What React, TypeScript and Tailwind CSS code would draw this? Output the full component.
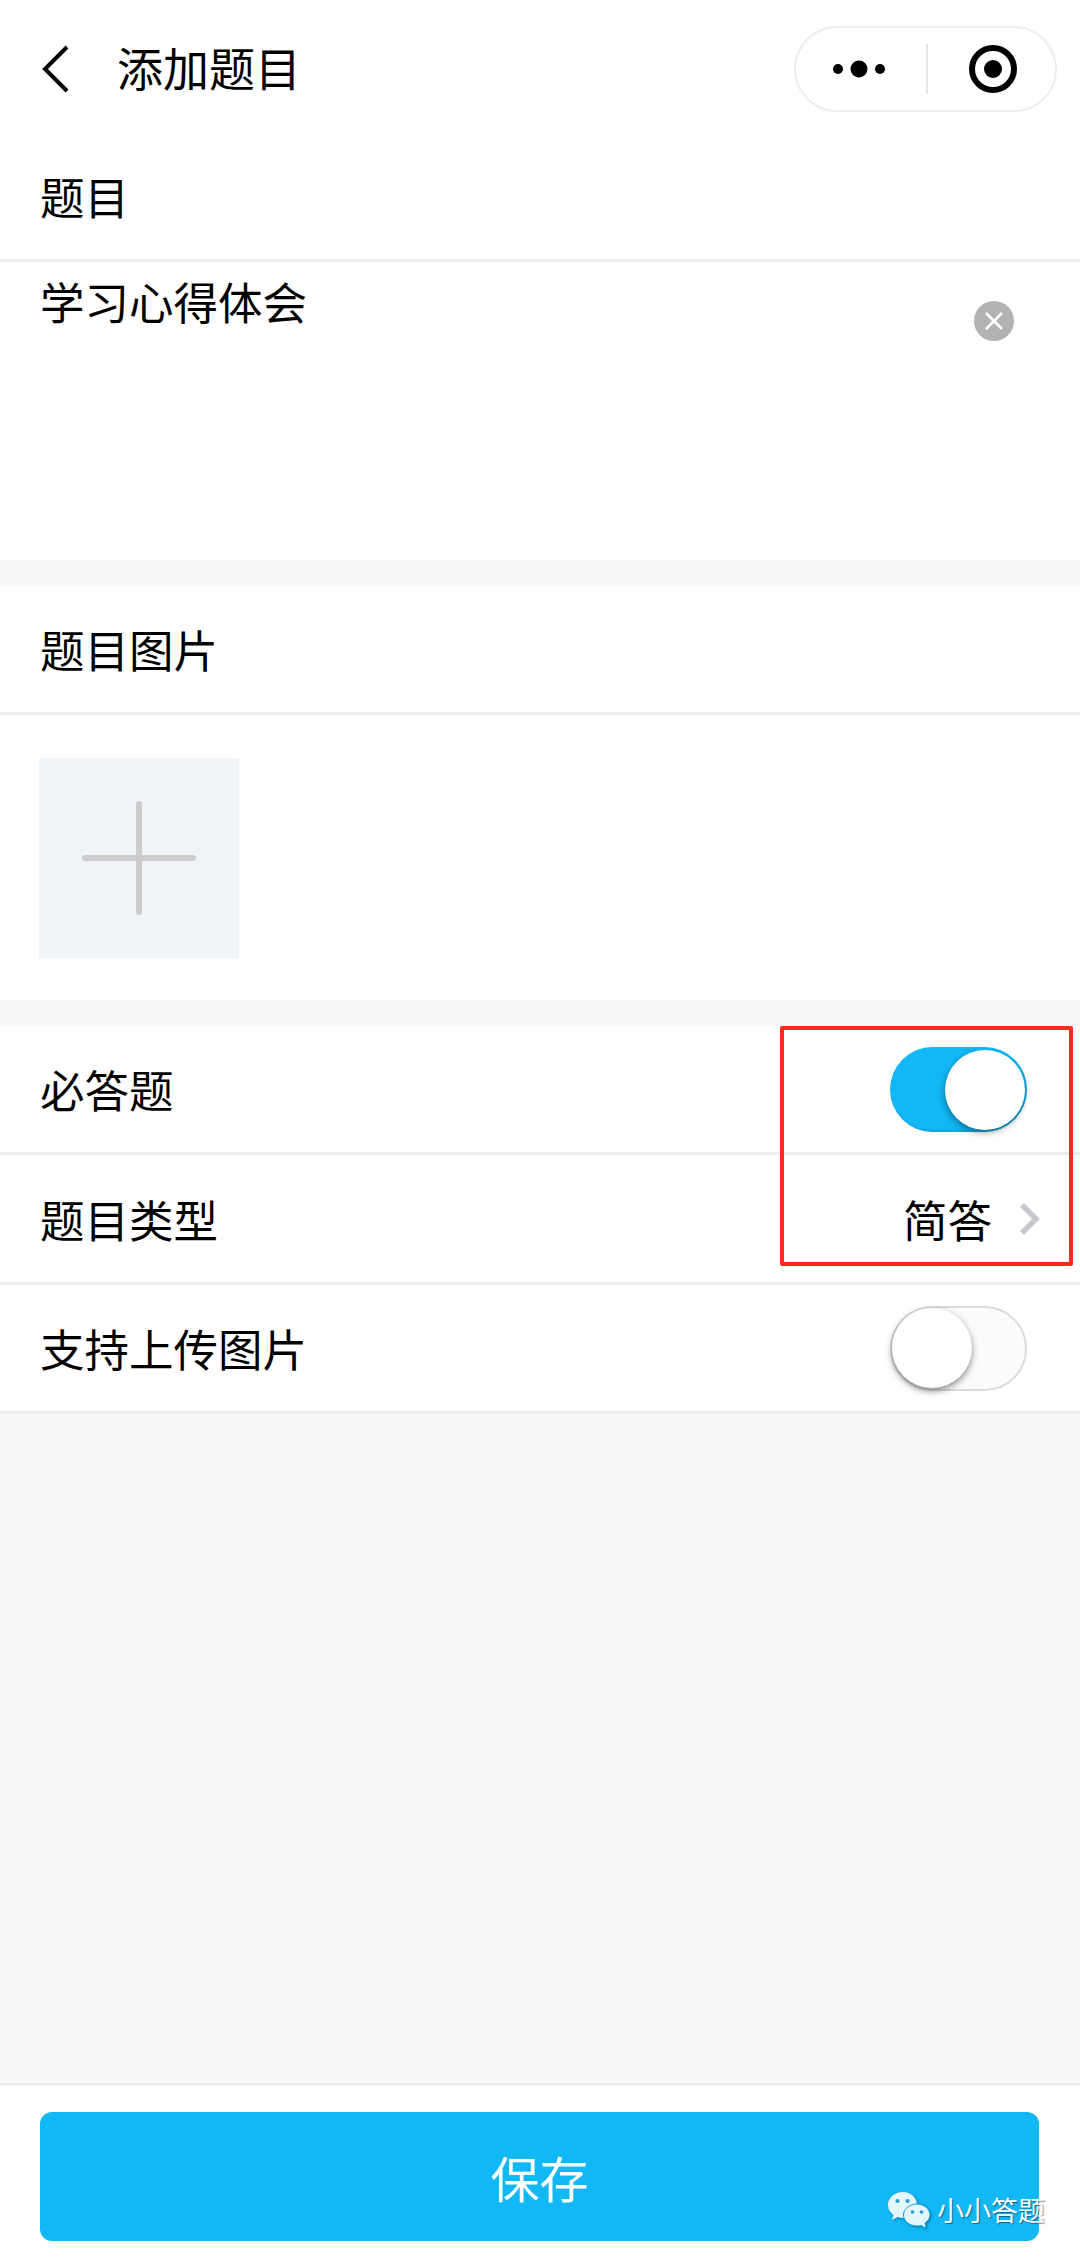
import React from "react";

function Toggle({ on }: { on: boolean }) {
  return (
    <div
      className={
        on
          ? "relative h-[85px] w-[137px] rounded-full bg-[#12b7f5] shadow-[inset_-2px_-2px_2px_rgba(30,120,160,0.35)]"
          : "relative h-[85px] w-[137px] rounded-full border-2 border-[#d9dcdf] bg-[#fbfbfb]"
      }
    >
      <div
        className={
          on
            ? "absolute right-[2px] top-[3px] h-[80px] w-[80px] rounded-full bg-white shadow-[-1px_3px_6px_rgba(0,0,0,0.35)]"
            : "absolute left-0 top-0 h-[80px] w-[80px] rounded-full bg-white shadow-[0_3px_7px_rgba(0,0,0,0.45)]"
        }
      />
    </div>
  );
}

export default function App() {
  return (
    <div className="relative flex h-[2261px] w-[1080px] flex-col overflow-hidden bg-[#f8f8f8] font-['Noto_Sans_CJK_SC',sans-serif] text-[44.5px] leading-[60px] text-black">
      {/* Navigation + title row */}
      <div className="flex h-[130px] items-center bg-white pl-[40px] pr-[23px] pt-[7px]">
        <svg width="28" height="48" viewBox="0 0 28 48" fill="none" className="ml-[2px] mr-[47px]">
          <path d="M25 2 L3 24 L25 46" stroke="#000" strokeWidth="4" />
        </svg>
        <span className="mt-[-6px] text-[46px]">添加题目</span>
        <div className="ml-auto flex h-[86px] w-[263px] items-center rounded-full border-2 border-[#ededed] bg-white">
          <svg width="130" height="50" viewBox="0 0 130 50" className="shrink-0">
            <circle cx="42" cy="25" r="5" fill="#000" />
            <circle cx="63" cy="25" r="8.5" fill="#000" />
            <circle cx="84" cy="25" r="5" fill="#000" />
          </svg>
          <div className="h-[50px] w-[2px] bg-[#e5e5e5]" />
          <svg width="50" height="50" viewBox="0 0 50 50" className="ml-[40px] shrink-0">
            <circle cx="25" cy="25" r="21" fill="none" stroke="#000" strokeWidth="6" />
            <circle cx="25" cy="25" r="9" fill="#000" />
          </svg>
        </div>
      </div>

      <div className="flex h-[132px] items-center border-b-[3px] border-[#eeeeee] bg-white px-[40px]">
        <span className="mt-[2px]">题目</span>
      </div>

      {/* Text area */}
      <div className="flex h-[298px] items-start justify-between bg-white pl-[40px] pr-[66px] pt-[9px]">
        <span>学习心得体会</span>
        <div className="mt-[30px] flex h-[40px] w-[40px] items-center justify-center rounded-full bg-[#b2b2b2]">
          <svg width="20" height="20" viewBox="0 0 20 20">
            <path d="M2 2 L18 18 M18 2 L2 18" stroke="#fff" strokeWidth="2.5" />
          </svg>
        </div>
      </div>

      {/* Image section */}
      <div className="mt-[26px] flex h-[129px] items-center border-b-[3px] border-[#eeeeee] bg-white px-[40px]">
        <span>题目图片</span>
      </div>
      <div className="flex h-[285px] items-center bg-white pl-[39px]">
        <div className="flex h-[200px] w-[200px] items-center justify-center bg-[#f0f3f8]">
          <svg width="114" height="114" viewBox="0 0 114 114">
            <path d="M3 57 H111 M57 3 V111" stroke="#cccccc" strokeWidth="6" strokeLinecap="round" />
          </svg>
        </div>
      </div>

      {/* Settings rows */}
      <div className="mt-[26px] flex h-[129px] items-center justify-between border-b-[3px] border-[#eeeeee] bg-white pl-[40px] pr-[53px]">
        <span>必答题</span>
        <Toggle on />
      </div>
      <div className="flex h-[130px] items-center border-b-[3px] border-[#eeeeee] bg-white pl-[40px] pr-[40px]">
        <span>题目类型</span>
        <span className="ml-auto mr-[27px]">简答</span>
        <svg width="21" height="34" viewBox="0 0 21 34" fill="none">
          <path d="M3 3 L17 17 L3 31" stroke="#c8c8cd" strokeWidth="5.5" />
        </svg>
      </div>
      <div className="flex h-[129px] items-center justify-between border-b-[3px] border-[#eeeeee] bg-white pl-[40px] pr-[53px]">
        <span>支持上传图片</span>
        <Toggle on={false} />
      </div>

      <div className="flex-1" />

      {/* Footer */}
      <div className="flex h-[178px] flex-col border-t-[3px] border-[#eeeeee] bg-white px-[40px] pt-[26px]">
        <div className="flex h-[129px] w-[999px] items-center justify-center rounded-[12px] bg-[#12b7f5] text-[49px] text-white">
          保存
        </div>
      </div>

      {/* Red annotation */}
      <div className="absolute left-[780px] top-[1026px] h-[240px] w-[293px] rounded-[2px] border-[4px] border-[#ff2a1f]" />

      {/* Watermark */}
      <div className="absolute left-[887px] top-[2190px] flex items-center gap-[6px] text-[27px] leading-[40px] text-white [text-shadow:1px_1px_1px_rgba(0,0,0,0.45)]">
        <svg width="44" height="40" viewBox="0 0 44 40" className="drop-shadow-[1px_1px_1px_rgba(0,0,0,0.35)]">
          <path d="M16 2 C7.5 2 1 7.8 1 15 C1 19.2 3.2 22.6 6.6 25 L5 30 L11 27 C13 27.7 14.6 28 16 28 C23.5 28 30 22.5 30 15 C30 7.8 24 2 16 2 Z" fill="#e3f6fd" />
          <path d="M30 14 C22.5 14 16.5 19 16.5 25 C16.5 31 22.5 36 30 36 C31.5 36 32.8 35.8 34 35.4 L39 38.5 L38 33 C41 31 43 28.2 43 25 C43 19 37 14 30 14 Z" fill="#e3f6fd" stroke="#12a0d8" strokeWidth="1" />
          <circle cx="10.5" cy="11" r="2" fill="#2b9cc8" />
          <circle cx="20.5" cy="11" r="2" fill="#2b9cc8" />
          <circle cx="25.5" cy="22" r="1.8" fill="#2b9cc8" />
          <circle cx="34.5" cy="22" r="1.8" fill="#2b9cc8" />
        </svg>
        <span>小小答题</span>
      </div>
    </div>
  );
}
